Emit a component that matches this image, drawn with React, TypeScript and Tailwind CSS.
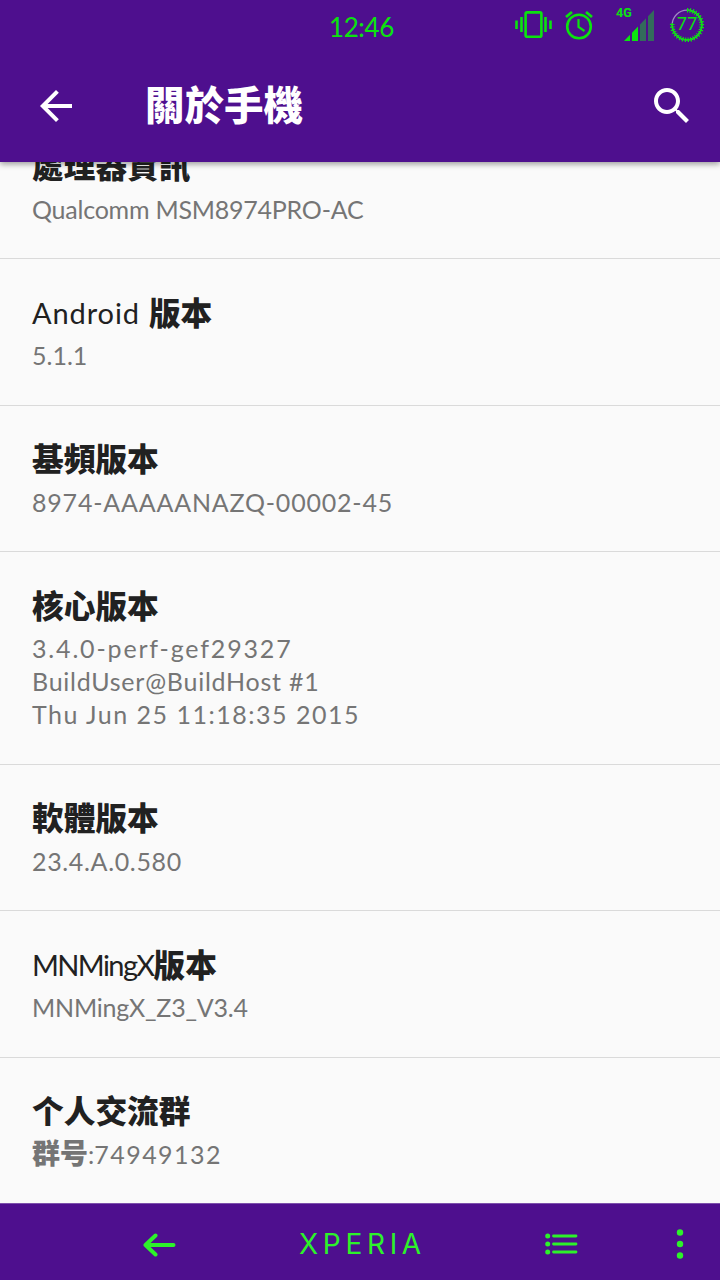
import React from 'react';

interface Part {
  text: string;
  className: string;
}

interface InfoRow {
  title: Part[];
  value: Part[];
}

const CJK = "relative font-['Noto_Sans_CJK_TC',sans-serif] font-black";

const rows: InfoRow[] = [
  {
    title: [{ text: '處理器資訊', className: CJK }],
    value: [{ text: 'Qualcomm MSM8974PRO-AC', className: 'tracking-[-0.23px]' }],
  },
  {
    title: [
      { text: 'Android', className: 'tracking-[0.9px] mr-[9px]' },
      { text: '版本', className: CJK },
    ],
    value: [{ text: '5.1.1', className: 'tracking-normal' }],
  },
  {
    title: [{ text: '基頻版本', className: CJK }],
    value: [{ text: '8974-AAAAANAZQ-00002-45', className: 'tracking-[0.8px]' }],
  },
  {
    title: [{ text: '核心版本', className: CJK }],
    value: [
      { text: '3.4.0-perf-gef29327', className: 'tracking-[1.83px]' },
      { text: 'BuildUser@BuildHost #1', className: 'tracking-[0.75px]' },
      { text: 'Thu Jun 25 11:18:35 2015', className: 'tracking-[1.5px]' },
    ],
  },
  {
    title: [{ text: '軟體版本', className: CJK }],
    value: [{ text: '23.4.A.0.580', className: 'tracking-[0.65px]' }],
  },
  {
    title: [
      { text: 'MNMingX', className: 'tracking-[-1.6px]' },
      { text: '版本', className: CJK },
    ],
    value: [{ text: 'MNMingX_Z3_V3.4', className: 'tracking-[-0.2px]' }],
  },
  {
    title: [{ text: '个人交流群', className: CJK }],
    value: [{ text: '74949132', className: 'tracking-[1.45px]' }],
  },
];

// One tick every 3% of the ring, up to the charge level
const BATTERY_LEVEL = 77;
const ticks = Array.from({ length: Math.floor(BATTERY_LEVEL / 3) }, () => '1.3 1.7').join(' ') + ' 1.3 100';

const StatusBar = () => (
  <div className="flex h-[50px] items-center text-[#0be30f]">
    <div className="w-[500px] pl-[329px] pt-[3px] text-[26px] leading-[50px] tracking-[-0.4px]">12:46</div>
    <svg width="220" height="50" viewBox="500 0 220 50" fill="none" stroke="currentColor">
      {/* Vibrate */}
      <rect x="525.6" y="12.4" width="15.8" height="24.4" rx="1.5" strokeWidth="2.6" />
      <path d="M516.5 20.5v8.500M521.500 17v15M545.500 17v15M550.500 20.500v8.500" strokeWidth="2.6" />
      {/* Alarm */}
      <circle cx="579" cy="26.5" r="11.8" strokeWidth="2.6" />
      <path d="M578.5 19v8l6 4" strokeWidth="2.2" />
      <path d="M566 17l6-5M586 12l6 5" strokeWidth="2.8" />
      {/* Signal */}
      <path d="M624 41l6-6.2V41zM632 41v-8.3l6-6.2V41z" fill="currentColor" stroke="none" />
      <path d="M640 41V24.500l6-6.200V41zM648 41V16.200l6-6.200V41z" fill="#336b5c" stroke="none" />
      <text x="616" y="16.500" fontSize="12.500" fontWeight="700" fill="currentColor" stroke="none" className="font-['Roboto',sans-serif]">4G</text>
      {/* Battery ring */}
      <circle cx="687" cy="25" r="14.800" stroke="#a187c4" strokeWidth="1.300" />
      <circle cx="687" cy="25" r="14.800" strokeWidth="1.500" pathLength="100" strokeDasharray="77 23" transform="rotate(-90 687 25)" />
      <circle cx="687" cy="25" r="14.800" strokeWidth="4.600" pathLength="100" strokeDasharray={ticks} transform="rotate(-90 687 25)" />
      <text x="687" y="30" fontSize="17.500" textAnchor="middle" fill="currentColor" stroke="none">77</text>
    </svg>
  </div>
);

const Toolbar = () => (
  <div className="flex h-28 items-center pl-8 pr-6 text-white">
    <svg width="48" height="48" viewBox="0 0 24 24" fill="currentColor">
      <path d="M20 11H7.830l5.590-5.590L12 4l-8 8 8 8 1.410-1.410L7.830 13H20v-2z" />
    </svg>
    <h1 className={`${CJK} ml-[65px] mb-[7px] flex-1 text-[39.5px] leading-[56px]`}>關於手機</h1>
    <svg width="48" height="48" viewBox="0 0 24 24" fill="currentColor">
      <path d="M15.500 14h-.79l-.28-.27C15.410 12.590 16 11.110 16 9.500 16 5.910 13.090 3 9.500 3S3 5.910 3 9.500 5.910 16 9.500 16c1.610 0 3.090-.59 4.230-1.570l.27.28v.79l5 4.990L20.490 19l-4.990-5zm-6 0C7.010 14 5 11.990 5 9.500S7.010 5 9.500 5 14 7.010 14 9.500 11.990 14 9.500 14z" />
    </svg>
  </div>
);

const Row: React.FC<{ row: InfoRow; last: boolean }> = ({ row, last }) => (
  <li className={`px-8 pt-8 pb-[32.5px] ${last ? '' : 'border-b border-[#dadada]'}`}>
    <div className="flex h-11 items-center text-[29px] leading-[44px] text-[#212121]">
      {row.title.map((part) => (
        <span key={part.text} className={`${part.className} ${part.className === CJK ? 'mb-[5px] text-[31.7px]' : ''}`}>
          {part.text}
        </span>
      ))}
    </div>
    <div className="mt-1 text-[25px] leading-[33px] text-[#757575]">
      {row.value.map((part) => (
        <div key={part.text} className="flex h-[33px] items-center whitespace-nowrap">
          {last && (
            <>
              <span className={`${CJK} mb-1 text-[28px]`}>群号</span>
              <span>:</span>
            </>
          )}
          <span className={part.className}>{part.text}</span>
        </div>
      ))}
    </div>
  </li>
);

const NavBar = () => (
  <nav className="relative z-10 flex h-[77px] shrink-0 items-center border-t border-[#7d4fac] bg-[#4e0f8e] pt-[3px] text-[#2df22a]">
    <svg className="ml-[142px]" width="36" height="26" viewBox="0 0 36 26" fill="none" stroke="currentColor" strokeWidth="4" strokeLinecap="round" strokeLinejoin="round">
      <path d="M31.500 14H4M13.500 4.500L3.500 14l10 9.500" />
    </svg>
    <span className="ml-[121px] w-[246px] text-[28px] leading-[40px] tracking-[4.7px] font-['Inter',sans-serif]">XPERIA</span>
    <svg width="34" height="24" viewBox="0 0 34 24" fill="currentColor">
      <circle cx="2.700" cy="4" r="2.500" />
      <circle cx="2.700" cy="12" r="2.500" />
      <circle cx="2.700" cy="20" r="2.500" />
      <path d="M8.500 4h22.500M8.500 12h22.500M8.500 20h22.500" stroke="currentColor" strokeWidth="2.800" strokeLinecap="round" />
    </svg>
    <svg className="ml-[97px]" width="8" height="30" viewBox="0 0 8 30" fill="currentColor">
      <circle cx="4" cy="3.500" r="3.200" />
      <circle cx="4" cy="15" r="3.200" />
      <circle cx="4" cy="26.500" r="3.200" />
    </svg>
  </nav>
);

export default function App() {
  return (
    <div className="flex h-[1280px] w-[720px] flex-col overflow-hidden bg-[#fafafa] font-['Lato',sans-serif]">
      <header className="relative z-10 h-[162px] shrink-0 bg-[#4e0f8e] shadow-[0_2px_6px_rgba(0,0,0,0.4)]">
        <StatusBar />
        <Toolbar />
      </header>
      <main className="min-h-0 flex-1 overflow-hidden">
        <ul className="-mt-[49.5px]">
          {rows.map((row, i) => (
            <Row key={i} row={row} last={i === rows.length - 1} />
          ))}
        </ul>
      </main>
      <NavBar />
    </div>
  );
}
